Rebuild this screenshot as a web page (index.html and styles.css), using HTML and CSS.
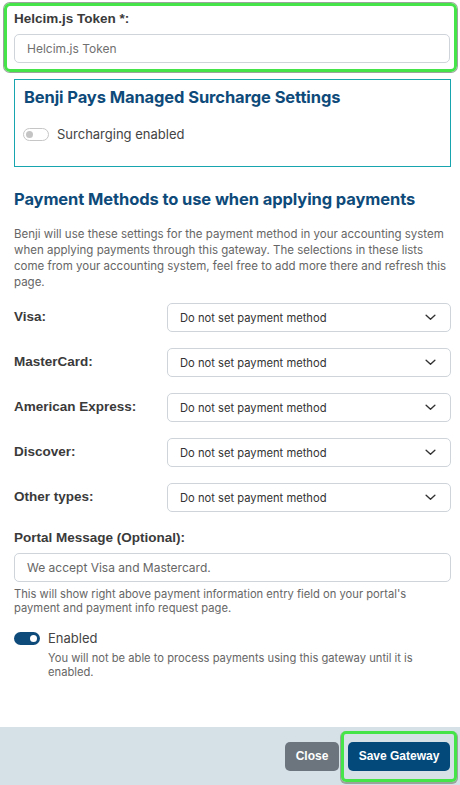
FILE: index.html
```html
<!DOCTYPE html>
<html>
<head>
<meta charset="utf-8">
<link rel="stylesheet" href="styles.css">
</head>
<body>
<div class="modal">
  <div class="body">
    <div class="hl-group">
      <label class="lbl">Helcim.js Token *:</label>
      <div class="input placeholder">Helcim.js Token</div>
    </div>

    <div class="surcharge">
      <h3 class="h">Benji Pays Managed Surcharge Settings</h3>
      <div class="switch-row">
        <span class="switch off"><span class="knob"></span></span>
        <span class="switch-text">Surcharging enabled</span>
      </div>
    </div>

    <h3 class="h pm-title">Payment Methods to use when applying payments</h3>
    <p class="desc">Benji will use these settings for the payment method in your accounting system when applying payments through this gateway. The selections in these lists come from your accounting system, feel free to add more there and refresh this page.</p>

    <div class="rows">
      <div class="row"><span class="lbl">Visa:</span><div class="select"><span>Do not set payment method</span><svg class="chev" viewBox="0 0 12 8" width="11" height="7"><path d="M1 1.5l5 4.5 5-4.5" fill="none" stroke="#333" stroke-width="1.6" stroke-linecap="round" stroke-linejoin="round"/></svg></div></div>
      <div class="row"><span class="lbl">MasterCard:</span><div class="select"><span>Do not set payment method</span><svg class="chev" viewBox="0 0 12 8" width="11" height="7"><path d="M1 1.5l5 4.5 5-4.5" fill="none" stroke="#333" stroke-width="1.6" stroke-linecap="round" stroke-linejoin="round"/></svg></div></div>
      <div class="row"><span class="lbl">American Express:</span><div class="select"><span>Do not set payment method</span><svg class="chev" viewBox="0 0 12 8" width="11" height="7"><path d="M1 1.5l5 4.5 5-4.5" fill="none" stroke="#333" stroke-width="1.6" stroke-linecap="round" stroke-linejoin="round"/></svg></div></div>
      <div class="row"><span class="lbl">Discover:</span><div class="select"><span>Do not set payment method</span><svg class="chev" viewBox="0 0 12 8" width="11" height="7"><path d="M1 1.5l5 4.5 5-4.5" fill="none" stroke="#333" stroke-width="1.6" stroke-linecap="round" stroke-linejoin="round"/></svg></div></div>
      <div class="row"><span class="lbl">Other types:</span><div class="select"><span>Do not set payment method</span><svg class="chev" viewBox="0 0 12 8" width="11" height="7"><path d="M1 1.5l5 4.5 5-4.5" fill="none" stroke="#333" stroke-width="1.6" stroke-linecap="round" stroke-linejoin="round"/></svg></div></div>
    </div>

    <div class="portal">
      <label class="lbl">Portal Message (Optional):</label>
      <div class="input value">We accept Visa and Mastercard.</div>
      <p class="help">This will show right above payment information entry field on your portal's payment and payment info request page.</p>
    </div>

    <div class="enabled">
      <div class="switch-row">
        <span class="switch on"><span class="knob"></span></span>
        <span class="switch-text">Enabled</span>
      </div>
      <p class="help indent">You will not be able to process payments using this gateway until it is enabled.</p>
    </div>
  </div>

  <div class="footer">
    <button class="btn close">Close</button>
    <span class="hl-btn"><button class="btn save">Save Gateway</button></span>
  </div>
</div>
</body>
</html>
```

FILE: styles.css
```css
* { box-sizing: border-box; }
html, body { margin: 0; padding: 0; background: #fff; }
body { font-family: Inter, "Noto Sans", sans-serif; color: #444; width: 460px; height: 785px; overflow: hidden; }

.modal { display: flex; flex-direction: column; height: 785px; }
.body { flex: 1; padding: 0 9px 0 14px; }

.lbl { font-family: "Liberation Sans", Arial, sans-serif; font-weight: 700; font-size: 13.5px; color: #3a3a3a; display: block; }

.hl-group {
  margin: 3px -6px 0 -10px;
  border: 3px solid #45e54a;
  border-radius: 6px;
  box-shadow: 0 0 0 1px #9aa49a;
  padding: 5px 4px 6px 7px;
}
.hl-group .lbl { line-height: 16px; margin-bottom: 7px; }

.input {
  height: 29px;
  border: 1px solid #ced4da;
  border-radius: 5px;
  padding: 0 12px;
  font-size: 12px;
  line-height: 27px;
  color: #707070;
}

.surcharge {
  margin-top: 7px;
  border: 1px solid #17a6b0;
  height: 88px;
  padding: 7px 9px;
}
.h { margin: 0; font-weight: 700; font-size: 16.5px; color: #0e4a7a; line-height: 21px; letter-spacing: -0.1px; }

.switch-row { display: flex; align-items: center; }
.surcharge .switch-row { margin-top: 18px; }
.switch { width: 26px; height: 13px; border-radius: 7px; position: relative; flex: none; }
.surcharge .switch { margin-left: -1px; }
.switch.off { border: 1px solid #c6c6c6; background: #fff; }
.switch.off .knob { position: absolute; left: 2px; top: 2px; width: 7px; height: 7px; border-radius: 50%; background: #c4c4c4; }
.switch.on { background: #0e4a7a; }
.switch.on .knob { position: absolute; right: 3px; top: 3px; width: 7px; height: 7px; border-radius: 50%; background: #fff; }
.switch-text { font-size: 13px; margin-left: 8px; color: #444; line-height: 17px; }

.pm-title { margin-top: 22px; }
.desc { margin: 16px 0 0; font-size: 11.5px; line-height: 16px; color: #666; }

.rows { margin-top: 13px; display: flex; flex-direction: column; gap: 16px; }
.row { display: flex; align-items: flex-start; }
.row .lbl { width: 153px; padding-top: 6px; }
.select {
  flex: 1;
  height: 29px;
  border: 1px solid #ced4da;
  border-radius: 5px;
  display: flex;
  align-items: center;
  justify-content: space-between;
  padding: 0 14px 0 12px;
  font-size: 11.2px;
  color: #333;
}

.portal { margin-top: 18px; }
.portal .lbl { line-height: 15px; margin-bottom: 8px; }
.input.value { color: #666; }
.help { margin: 5px 0 0; font-size: 11.2px; line-height: 14px; color: #666; }

.enabled { margin-top: 15px; }
.help.indent { margin: 5px 0 0 34px; line-height: 13.5px; }

.footer {
  height: 58px;
  background: #d6e0e7;
  display: flex;
  justify-content: flex-end;
  align-items: center;
  padding: 0 3px 0 0;
  flex: none;
}
.btn { font-family: "Liberation Sans", Arial, sans-serif; font-weight: 700; font-size: 12px; color: #fff; border: none; border-radius: 5px; height: 29px; padding: 0; white-space: nowrap; }
.btn.close { background: #6c757d; margin-right: 2px; width: 54px; }
.hl-btn { border: 3px solid #45e54a; border-radius: 5px; padding: 8px 4px; box-shadow: 0 1px 0 1px #9aa49a; display: flex; }
.btn.save { background: #034a7b; width: 102px; }
```
